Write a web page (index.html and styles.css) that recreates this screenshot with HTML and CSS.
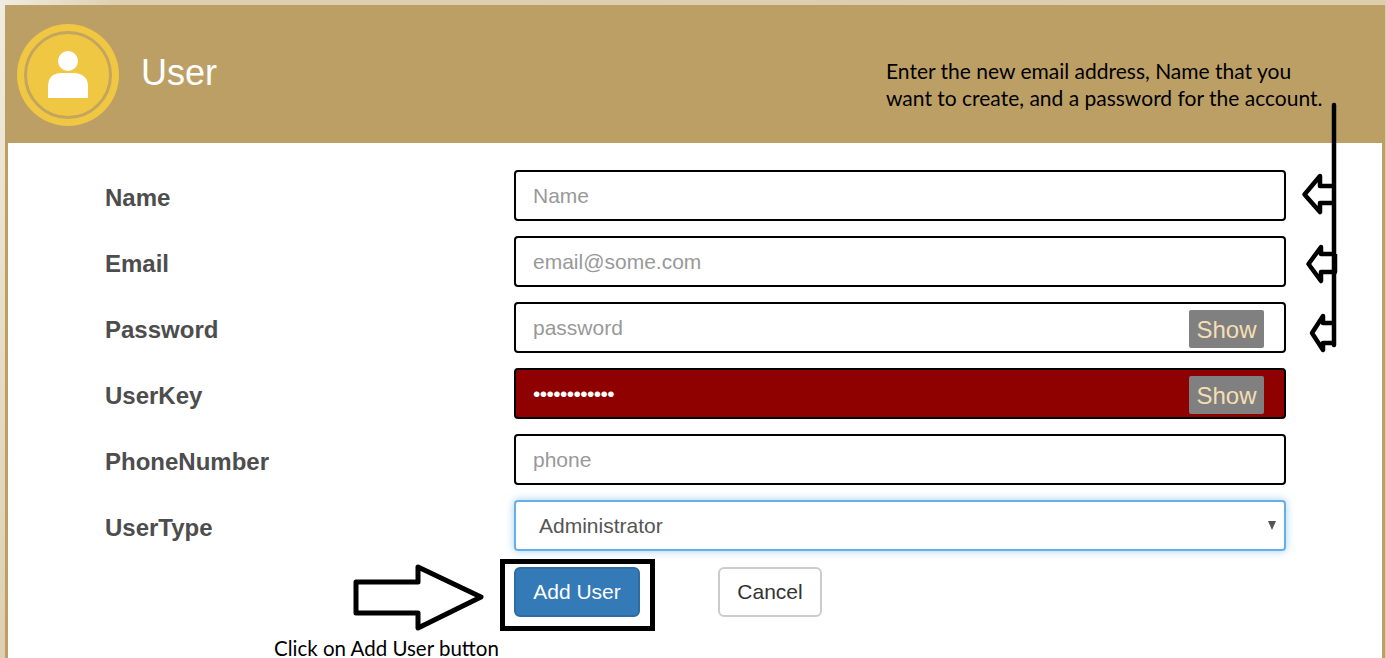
FILE: index.html
```html
<!doctype html>
<html>
<head>
    <title>User</title>
    <meta charset="utf-8"/>
    <link rel="stylesheet" href="styles.css">
</head>
<body>
<div class="panel">
    <div class="panel-head">
        <svg class="avatar" width="104" height="104" viewBox="0 0 104 104">
            <circle cx="52" cy="52" r="51" fill="#efc743"/>
            <circle cx="52" cy="52" r="42.5" fill="none" stroke="#c3a55e" stroke-width="3"/>
            <circle cx="52" cy="38" r="10" fill="#fff"/>
            <path d="M32 75V63c0-8 5-13 13-13h13c8 0 14 5 14 13v12z" fill="#fff"/>
        </svg>
        <h1 class="panel-title">User</h1>
    </div>
    <form class="user-form">
        <label class="field-label" for="name">Name</label>
        <input class="field" type="text" id="name" placeholder="Name"/>

        <label class="field-label" for="email">Email</label>
        <input class="field" type="text" id="email" placeholder="email@some.com"/>

        <label class="field-label" for="password">Password</label>
        <div class="field-wrap">
            <input class="field" type="text" id="password" placeholder="password"/>
            <button class="show-btn" type="button">Show</button>
        </div>

        <label class="field-label" for="userkey">UserKey</label>
        <div class="field-wrap">
            <input class="field field-key" type="password" id="userkey" value="123456789012"/>
            <button class="show-btn" type="button">Show</button>
        </div>

        <label class="field-label" for="phone">PhoneNumber</label>
        <input class="field" type="text" id="phone" placeholder="phone"/>

        <label class="field-label" for="usertype">UserType</label>
        <div class="field-wrap select-wrap">
            <select class="field field-select" id="usertype">
                <option>Administrator</option>
                <option>User</option>
            </select>
        </div>

        <div class="actions">
            <button class="btn btn-primary" type="button">Add User</button>
            <button class="btn btn-default" type="button">Cancel</button>
        </div>
    </form>
</div>

<!-- annotations drawn over the screenshot -->
<p class="note note-top">Enter the new email address, Name that you<br>want to create, and a password for the account.</p>
<p class="note note-bottom">Click on Add User button</p>
<div class="highlight-box"></div>
<svg class="marks" width="1386" height="658" viewBox="0 0 1386 658">
    <g fill="none" stroke="#000" stroke-width="4.500">
        <path d="M1334 105V345" stroke-linecap="round"/>
        <path d="M1334 186H1320V176L1304.500 194.500L1320 212V203H1334" stroke-linejoin="round"/>
        <path d="M1335 254H1321V247L1308.500 264L1321 281V272H1335V254" stroke-linejoin="round"/>
        <path d="M1335 323H1323V316L1312 333L1323 350V343H1335" stroke-linejoin="round"/>
        <path d="M356 582H418V567L481 597L418 628V613H356Z" stroke-width="5" stroke-linejoin="round"/>
    </g>
</svg>
</body>
</html>
```

FILE: styles.css
```css
html, body {
height: 658px;
overflow: hidden;
}
body {
margin: 0;
padding: 5px 1px 0 5px;
box-sizing: border-box;
position: relative;
background: linear-gradient(100deg, #f1ece0 0, #ddcfb0 8%, #dccdad 100%);
font-family: "Liberation Sans", Arial, sans-serif;
}
.panel {
background-color: #fff;
border-left: 3px solid #bc9f65;
border-right: 3px solid #bc9f65;
height: 653px;
}
.panel-head {
display: flex;
align-items: center;
gap: 21px;
height: 138px;
margin-left: -3px;
margin-right: -3px;
padding-left: 11px;
padding-top: 1px;
box-sizing: border-box;
background-color: #bc9f65;
}
.avatar {
margin-top: 1px;
flex: none;
}
.panel-title {
margin: 0 0 4px 0;
color: #fff;
font-size: 36px;
font-weight: normal;
}
.user-form {
display: grid;
grid-template-columns: 409px 772px;
row-gap: 15px;
padding: 27px 0 0 97px;
}
.field-label {
padding-top: 14px;
color: #4d4d4d;
font-size: 24px;
font-weight: bold;
line-height: 28px;
}
.field {
display: block;
width: 100%;
height: 51px;
padding: 0 17px;
box-sizing: border-box;
background-color: #fff;
border: 2px solid #000;
border-radius: 4px;
color: #555;
font-family: inherit;
font-size: 21px;
outline: none;
}
.field::placeholder {
color: #999;
opacity: 1;
}
.field-wrap {
position: relative;
}
.field-key {
background-color: #8f0000;
color: #fff;
letter-spacing: -.6px;
}
.show-btn {
position: absolute;
top: 8px;
right: 22px;
width: 75px;
height: 38px;
padding: 2px 0 0 0;
background-color: #808080;
border: 0;
border-radius: 2px;
color: #f5deb3;
font-family: inherit;
font-size: 24px;
}
.field-select {
padding-left: 23px;
border-color: #66afe9;
box-shadow: 0 0 8px rgba(102, 175, 233, .6);
appearance: none;
}
.select-wrap::after {
content: "";
position: absolute;
top: 21px;
right: 10px;
border-style: solid;
border-width: 9px 4.5px 0 4.5px;
border-color: #555 transparent transparent transparent;
}
.actions {
grid-column: 2;
display: flex;
gap: 78px;
margin-top: 1px;
}
.btn {
height: 50px;
border-radius: 6px;
font-family: inherit;
font-size: 21px;
}
.btn-primary {
width: 126px;
background-color: #337ab7;
border: 2px solid #2e6da4;
color: #fff;
}
.btn-default {
width: 104px;
background-color: #fff;
border: 2px solid #ccc;
color: #333;
}
.note {
position: absolute;
margin: 0;
color: #000;
font-family: Lato, "Open Sans", sans-serif;
font-size: 21px;
line-height: 27px;
white-space: nowrap;
}
.note-top {
left: 886px;
top: 57px;
}
.note-bottom {
left: 274px;
top: 638px;
font-size: 20.500px;
line-height: 20px;
}
.highlight-box {
position: absolute;
left: 500px;
top: 559px;
width: 155px;
height: 72px;
box-sizing: border-box;
border: 5px solid #000;
}
.marks {
position: absolute;
left: 0;
top: 0;
}
```
